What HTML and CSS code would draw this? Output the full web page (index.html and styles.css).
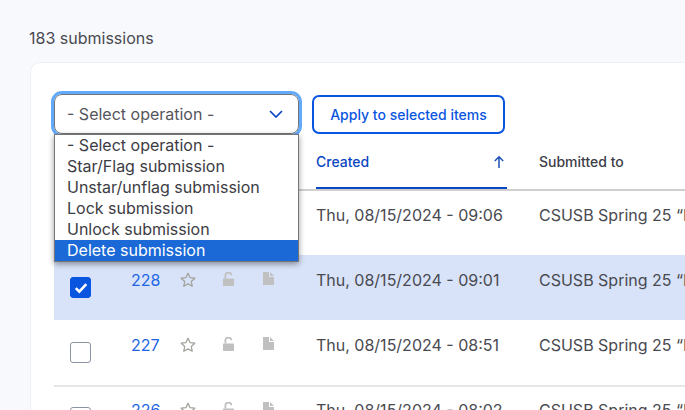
FILE: index.html
```html
<!DOCTYPE html>
<html lang="en">
<head>
<meta charset="utf-8">
<title>Submissions</title>
<link rel="stylesheet" href="styles.css">
</head>
<body>
<svg class="defs" width="0" height="0" aria-hidden="true">
  <symbol id="star" viewBox="0 0 16 16"><path d="M8 1.300l2 4.300 4.800.6-3.500 3.300.9 4.700L8 11.900l-4.200 2.300.9-4.700L1.200 6.200 6 5.600z" fill="none" stroke="#a3a39c" stroke-width="1.300" stroke-linejoin="round"/></symbol>
  <symbol id="lock" viewBox="0 0 11 14"><path d="M.7 6.500h9.600a.7.7 0 0 1 .7.7v6a.7.7 0 0 1-.7.7H.7a.7.7 0 0 1-.7-.7v-6a.7.7 0 0 1 .7-.7z" fill="#c0c0c0"/><path d="M2.400 6.500V3.800a3 3 0 0 1 6-.5" fill="none" stroke="#c0c0c0" stroke-width="1.800"/></symbol>
  <symbol id="doc" viewBox="0 0 11 13"><path d="M0 0h6v5h5v8H0zM7 0l4 4H7z" fill="#c0c0c0"/></symbol>
</svg>
<main class="page">
  <p class="count">183 submissions</p>
  <section class="card">
    <form class="ops">
      <div class="select">
        <span>- Select operation -</span>
        <svg class="chev" width="14" height="8" viewBox="0 0 14 8"><path d="M1 1l6 6 6-6" fill="none" stroke="#0a47c2" stroke-width="1.700"/></svg>
      </div>
      <button class="apply" type="button">Apply to selected items</button>
      <ul class="menu">
        <li>- Select operation -</li>
        <li>Star/Flag submission</li>
        <li>Unstar/unflag submission</li>
        <li>Lock submission</li>
        <li>Unlock submission</li>
        <li class="active">Delete submission</li>
      </ul>
    </form>
    <table class="grid">
      <colgroup>
        <col class="c-check"><col class="c-num"><col class="c-icon"><col class="c-icon"><col class="c-doc"><col class="c-date"><col class="c-to">
      </colgroup>
      <thead>
        <tr>
          <th colspan="5"></th>
          <th class="sorted"><span class="sort">Created<svg width="12" height="14" viewBox="0 0 12 14"><path d="M6 13V2M1.800 6L6 1.800 10.200 6" fill="none" stroke="#1e52b8" stroke-width="1.500"/></svg></span></th>
          <th>Submitted to</th>
        </tr>
      </thead>
      <tbody>
        <tr class="first">
          <td></td><td></td><td></td><td></td><td></td>
          <td>Thu, 08/15/2024 - 09:06</td><td>CSUSB Spring 25 “I</td>
        </tr>
        <tr class="selected">
          <td><span class="box checked"><svg width="14" height="12" viewBox="0 0 14 12"><path d="M1.800 6.200l3.500 3.500 7-7.500" fill="none" stroke="#fff" stroke-width="2.600"/></svg></span></td><td class="num"><a>228</a></td>
          <td><svg class="i-star"><use href="#star"/></svg></td><td><svg class="i-lock"><use href="#lock"/></svg></td><td><svg class="i-doc"><use href="#doc"/></svg></td>
          <td>Thu, 08/15/2024 - 09:01</td><td>CSUSB Spring 25 “I</td>
        </tr>
        <tr>
          <td><span class="box"></span></td><td class="num"><a>227</a></td>
          <td><svg class="i-star"><use href="#star"/></svg></td><td><svg class="i-lock"><use href="#lock"/></svg></td><td><svg class="i-doc"><use href="#doc"/></svg></td>
          <td>Thu, 08/15/2024 - 08:51</td><td>CSUSB Spring 25 “I</td>
        </tr>
        <tr class="ruled">
          <td><span class="box"></span></td><td class="num"><a>226</a></td>
          <td><svg class="i-star"><use href="#star"/></svg></td><td><svg class="i-lock"><use href="#lock"/></svg></td><td><svg class="i-doc"><use href="#doc"/></svg></td>
          <td>Thu, 08/15/2024 - 08:02</td><td>CSUSB Spring 25 “I</td>
        </tr>
      </tbody>
    </table>
  </section>
</main>
</body>
</html>
```
FILE: styles.css
```css
* { box-sizing: border-box; }
html, body { margin: 0; height: 100%; overflow: hidden; }
body {
  background: #f8f9fd;
  font-family: Inter, "Liberation Sans", sans-serif;
  color: #45454f;
  font-size: 16px;
}
.defs { position: absolute; }
.page { padding: 29px 0 0 29px; width: 900px; }
.count { margin: 0 0 14px; font-size: 16px; line-height: 19px; color: #494950; }
.card {
  background: #fff;
  border: 1px solid #eeeff3;
  border-radius: 10px;
  margin-left: 1px;
  padding: 31px 0 0 23px;
  height: 500px;
}
.ops { position: relative; display: flex; align-items: flex-end; gap: 13px; height: 40px; }
.select {
  width: 245px;
  height: 40px;
  padding: 0 15px 0 12px;
  display: flex;
  align-items: center;
  justify-content: space-between;
  border: 1px solid #767676;
  border-radius: 8px;
  outline: 3px solid #62a9fa;
  font-size: 16px;
  color: #55555d;
  box-shadow: 0 1px 2px rgba(0,0,0,.15);
}
.apply {
  height: 39px;
  width: 193px;
  background: #fff;
  border: 2px solid #0a55e0;
  border-radius: 7px;
  color: #0a55e0;
  font: 500 14px Inter, sans-serif;
  padding: 0;
}
.menu {
  position: absolute;
  z-index: 2;
  left: 0;
  top: 40px;
  width: 245px;
  margin: 0;
  padding: 0;
  list-style: none;
  background: #fff;
  border: 1px solid #767676;
  box-shadow: 0 2px 6px rgba(0,0,0,.4);
  font-size: 16px;
  line-height: 21px;
  color: #3c3c44;
}
.menu li { padding-left: 12px; height: 21px; white-space: nowrap; }
.menu li.active { background: #1a69d6; color: #fff; }
.grid { border-collapse: separate; border-spacing: 0; table-layout: fixed; width: 875px; margin-top: 17px; font-size: 16px; }
.c-check { width: 77px; }
.c-num { width: 49px; }
.c-icon { width: 40px; }
.c-doc { width: 56px; }
.c-date { width: 223px; }
.c-to { width: 390px; }
th {
  height: 40px;
  padding: 1px 0 0;
  text-align: left;
  font-size: 14px;
  line-height: 20px;
  font-weight: 500;
  color: #3d3d47;
  border-bottom: 2px solid #cfcfcf;
  vertical-align: top;
}
.sorted { padding-right: 32px; color: #0a47c2; }
.sort { display: flex; justify-content: space-between; align-items: flex-start; height: 37px; border-bottom: 2px solid #0a47c2; padding-right: 2px; }
.sort svg { margin-top: 3px; }
td { height: 65px; padding: 15px 0 0; vertical-align: top; line-height: 20px; color: #494950; white-space: nowrap; overflow: hidden; }
.first td { height: 64px; padding-top: 14px; }
.selected td { background: #d8e3f9; }
.ruled td { border-top: 2px solid #e6e6e8; padding-top: 13px; }
.num { color: #1f66e5; }
.box {
  display: flex;
  align-items: center;
  justify-content: center;
  width: 21px;
  height: 21px;
  margin: 7px 0 0 16px;
  border: 1px solid #8c93a3;
  border-radius: 3px;
  background: #fff;
}
.box.checked { background: #0a55e0; border-color: #0a55e0; }
td > svg { display: block; margin-top: 2px; }
.i-star { width: 16px; height: 16px; }
.i-lock { width: 11px; height: 14px; margin-left: 3px; }
.i-doc { width: 11px; height: 13px; margin-left: 3px; }
```
